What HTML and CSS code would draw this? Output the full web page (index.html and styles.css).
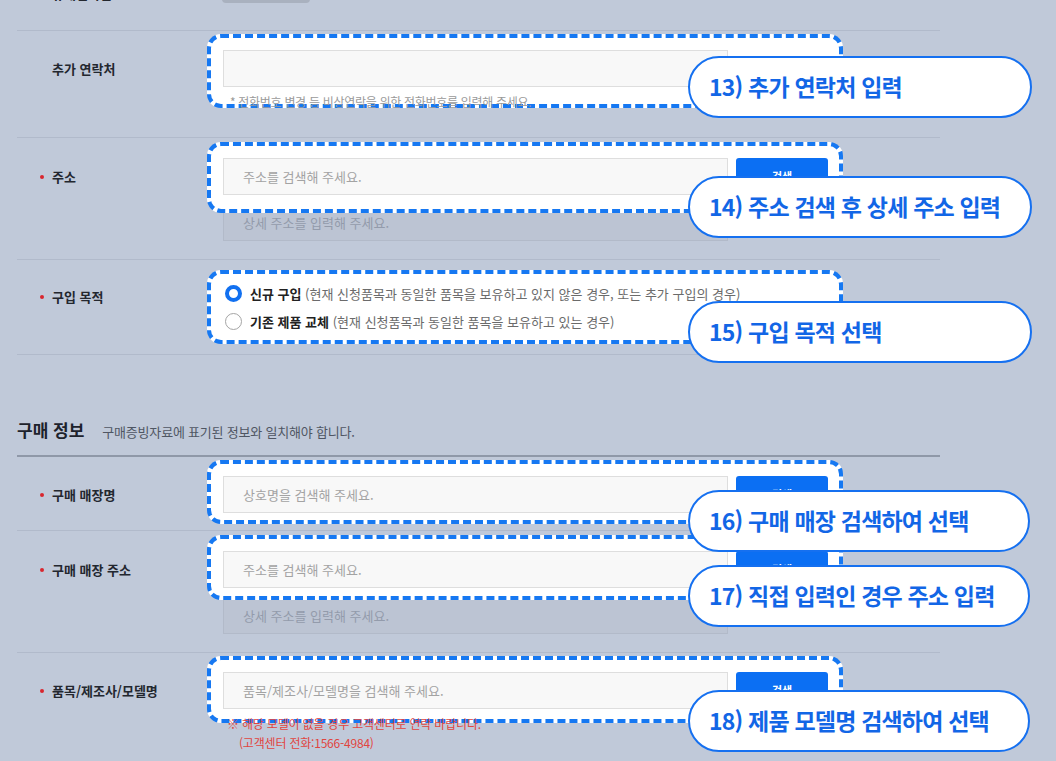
FILE: index.html
```html
<!DOCTYPE html>
<html lang="ko">
<head>
    <meta charset="UTF-8">
    <meta name="viewport" content="width=device-width, initial-scale=1.0">
    <title>신청서 작성 안내</title>
    <link rel="stylesheet" href="styles.css">
</head>
<body>
    <div class="page">
        <!-- row cut off by the top of the capture -->
        <div class="row row-cut">
            <div class="label">휴대전화번호</div>
            <div class="field"><span class="cut-box"></span></div>
        </div>

        <div class="row r1">
            <div class="label">추가 연락처</div>
            <div class="field">
                <div class="hl">
                    <div class="input-line"><span class="input"></span></div>
                    <p class="hint">* 전화번호 변경 등 비상연락을 위한 전화번호를 입력해 주세요.</p>
                </div>
            </div>
            <div class="callout c13">13) 추가 연락처 입력</div>
        </div>

        <div class="row r2">
            <div class="label req">주소</div>
            <div class="field">
                <div class="hl">
                    <div class="input-line">
                        <span class="input">주소를 검색해 주세요.</span>
                        <span class="btn">검색</span>
                    </div>
                </div>
                <div class="input dim">상세 주소를 입력해 주세요.</div>
            </div>
            <div class="callout c14">14) 주소 검색 후 상세 주소 입력</div>
        </div>

        <div class="row r3">
            <div class="label req">구입 목적</div>
            <div class="field">
                <div class="hl">
                    <div class="radio-line">
                        <span class="radio on"></span>
                        <span><b>신규 구입</b> (현재 신청품목과 동일한 품목을 보유하고 있지 않은 경우, 또는 추가 구입의 경우)</span>
                    </div>
                    <div class="radio-line">
                        <span class="radio"></span>
                        <span><b>기존 제품 교체</b> (현재 신청품목과 동일한 품목을 보유하고 있는 경우)</span>
                    </div>
                </div>
            </div>
            <div class="callout c15">15) 구입 목적 선택</div>
        </div>

        <div class="section-title">
            <h2>구매 정보</h2>
            <span>구매증빙자료에 표기된 정보와 일치해야 합니다.</span>
        </div>

        <div class="row r4">
            <div class="label req">구매 매장명</div>
            <div class="field">
                <div class="hl">
                    <div class="input-line">
                        <span class="input">상호명을 검색해 주세요.</span>
                        <span class="btn">검색</span>
                    </div>
                </div>
            </div>
            <div class="callout c16">16) 구매 매장 검색하여 선택</div>
        </div>

        <div class="row r5">
            <div class="label req">구매 매장 주소</div>
            <div class="field">
                <div class="hl">
                    <div class="input-line">
                        <span class="input">주소를 검색해 주세요.</span>
                        <span class="btn">검색</span>
                    </div>
                </div>
                <div class="input dim">상세 주소를 입력해 주세요.</div>
            </div>
            <div class="callout c17">17) 직접 입력인 경우 주소 입력</div>
        </div>

        <div class="row r6">
            <div class="label req">품목/제조사/모델명</div>
            <div class="field">
                <div class="hl">
                    <div class="input-line">
                        <span class="input">품목/제조사/모델명을 검색해 주세요.</span>
                        <span class="btn">검색</span>
                    </div>
                </div>
                <p class="warn">※ 해당 모델이 없을 경우 고객센터로 연락 바랍니다.<br><span>(고객센터 전화:1566-4984)</span></p>
            </div>
            <div class="callout c18">18) 제품 모델명 검색하여 선택</div>
        </div>
    </div>
</body>
</html>
```

FILE: styles.css
```css
body {
    margin: 0;
    background: #c0c9d9;
    font-family: "Noto Sans CJK KR", "Noto Sans", sans-serif;
    color: #222;
    overflow: hidden;
}

.page {
    width: 923px;
    padding-left: 17px;
}

.row {
    display: flex;
    position: relative;
    border-bottom: 1px solid #b1bacb;
}

.label {
    width: 190px;
    flex: none;
    box-sizing: border-box;
    padding: 25px 0 0 35px;
    font-size: 13px;
    line-height: 20px;
    font-weight: 700;
    color: #23272f;
}

.label.req::before {
    content: "";
    display: inline-block;
    width: 4px;
    height: 4px;
    border-radius: 50%;
    background: #d8262f;
    vertical-align: middle;
    margin: -2px 8px 0 -12px;
}

.field {
    flex: 1;
}

/* dashed highlight around the undimmed part */
.hl {
    position: relative;
    z-index: 1;
    width: 636px;
    box-sizing: border-box;
    border: 4px dashed #1678f2;
    border-radius: 14px;
    background: #fff;
    padding: 12px 11px 0 12px;
}

.input-line {
    display: flex;
    gap: 8px;
}

.input {
    display: block;
    width: 505px;
    height: 37px;
    box-sizing: border-box;
    border: 1px solid #dedede;
    background: #f8f8f8;
    padding-left: 19px;
    font-size: 13px;
    line-height: 35px;
    color: #a3a3a3;
}

.input.dim {
    background: #bcc4d3;
    border-color: #b2bac9;
    color: #939bab;
    margin-left: 16px;
}

.btn {
    width: 92px;
    height: 37px;
    border-radius: 3px;
    background: #0b6ff3;
    color: #fff;
    font-size: 11px;
    font-weight: 700;
    line-height: 37px;
    text-align: center;
}

.hint {
    margin: 8px 0 -5px;
    padding-left: 7px;
    font-size: 12px;
    line-height: 14px;
    letter-spacing: -0.3px;
    color: #9a9a9a;
}

.row-cut {
    height: 30px;
}

.row-cut .label {
    padding-top: 0;
    margin-top: -16px;
}

.cut-box {
    display: block;
    width: 88px;
    height: 20px;
    margin: -17px 0 0 15px;
    border-radius: 4px;
    background: #a9b1bf;
}

.r1 { padding: 3px 0 29px; }

.r2 { padding: 4px 0 18px; }
.r2 .hl { padding-bottom: 14px; }
.r2 .input.dim { margin-top: -9px; }

.r3 { padding: 10px 0; }
.r3 .label { padding-top: 17px; }
.r3 .hl { padding: 9px 11px 9px 14px; }

.radio-line {
    display: flex;
    align-items: center;
    gap: 8px;
    height: 20px;
    font-size: 13px;
    color: #6b6b6b;
}

.radio-line + .radio-line {
    margin-top: 8px;
}

.radio-line b {
    color: #222;
}

.radio {
    width: 17px;
    height: 17px;
    flex: none;
    box-sizing: border-box;
    border: 1px solid #a5a5a5;
    border-radius: 50%;
    background: #fff;
}

.radio.on {
    border: 4px solid #1170f0;
}

.section-title {
    display: flex;
    align-items: baseline;
    gap: 18px;
    padding: 63px 0 13px;
    border-bottom: 2px solid #8f98a8;
}

.section-title h2 {
    margin: 0;
    font-size: 17px;
    line-height: 24px;
    font-weight: 700;
    color: #1d222c;
}

.section-title span {
    font-size: 13px;
    letter-spacing: -0.2px;
    color: #4f5663;
}

.r4 { padding: 3px 0 6px; }
.r4 .hl { padding-bottom: 7px; }

.r5 { padding: 4px 0 18px; }
.r5 .hl { padding-bottom: 8px; }
.r5 .input.dim { margin-top: -3px; }

.r6 { padding: 3px 0 20px; }
.r6 .hl { padding-bottom: 10px; }

.warn {
    position: relative;
    z-index: 2;
    margin: -9px 0 0;
    padding-left: 20px;
    font-size: 12px;
    line-height: 19px;
    letter-spacing: -0.2px;
    color: #e0453f;
}

.warn span {
    padding-left: 12px;
}

/* step callouts */
.callout {
    position: absolute;
    z-index: 3;
    left: 671px;
    width: 344px;
    height: 62px;
    box-sizing: border-box;
    border: 2px solid #1570f0;
    border-radius: 31px;
    background: #fff;
    padding-left: 19px;
    font-size: 23px;
    line-height: 57px;
    font-weight: 700;
    letter-spacing: -0.8px;
    color: #1266e6;
}

.c13 { top: 25px; }
.c14 { top: 38px; }
.c15 { top: 41px; }
.c16 { top: 33px; width: 342px; }
.c17 { top: 34px; width: 342px; }
.c18 { top: 37px; width: 342px; }
```
